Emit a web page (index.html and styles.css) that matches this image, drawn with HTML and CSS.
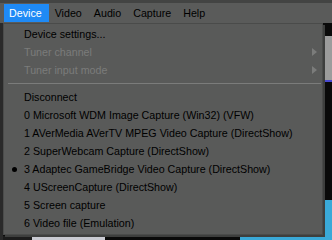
FILE: index.html
```html
<!DOCTYPE html>
<html>
<head>
<meta charset="utf-8">
<link rel="stylesheet" href="styles.css">
</head>
<body>
<div class="screen">
  <div class="topstrip"></div>
  <nav class="menubar">
    <span class="mitem active">Device</span>
    <span class="mitem">Video</span>
    <span class="mitem">Audio</span>
    <span class="mitem">Capture</span>
    <span class="mitem">Help</span>
  </nav>
  <div class="content">
    <div class="bg-left"></div>
    <div class="bg-mid">
      <div class="bg-fill"></div>
      <div class="bg-bottom">
        <span class="seg seg-dark" style="width:29px"></span>
        <span class="seg seg-light" style="width:73px"></span>
        <span class="seg seg-black" style="width:135px"></span>
        <span class="seg seg-cyan"></span>
      </div>
    </div>
    <div class="bg-right">
      <span class="seg seg-black" style="height:13px"></span>
      <span class="seg seg-gray" style="height:44px"></span>
      <span class="seg seg-blue" style="height:2px"></span>
      <span class="seg seg-black" style="height:118px"></span>
      <span class="seg seg-cyan fill"></span>
    </div>

    <ul class="dropdown">
      <li class="item"><span class="check"></span><span class="label">Device settings...</span></li>
      <li class="item disabled"><span class="check"></span><span class="label">Tuner channel</span><span class="arrow"></span></li>
      <li class="item disabled"><span class="check"></span><span class="label">Tuner input mode</span><span class="arrow"></span></li>
      <li class="sep"></li>
      <li class="item"><span class="check"></span><span class="label">Disconnect</span></li>
      <li class="item"><span class="check"></span><span class="label">0 Microsoft WDM Image Capture (Win32) (VFW)</span></li>
      <li class="item"><span class="check"></span><span class="label">1 AVerMedia AVerTV MPEG Video Capture (DirectShow)</span></li>
      <li class="item"><span class="check"></span><span class="label">2 SuperWebcam Capture (DirectShow)</span></li>
      <li class="item"><span class="check"><span class="dot"></span></span><span class="label">3 Adaptec GameBridge Video Capture (DirectShow)</span></li>
      <li class="item"><span class="check"></span><span class="label">4 UScreenCapture (DirectShow)</span></li>
      <li class="item"><span class="check"></span><span class="label">5 Screen capture</span></li>
      <li class="item"><span class="check"></span><span class="label">6 Video file (Emulation)</span></li>
    </ul>
  </div>
</div>
</body>
</html>
```

FILE: styles.css
```css
* { box-sizing: border-box; }
html, body { margin: 0; padding: 0; }
body {
  width: 332px;
  height: 240px;
  overflow: hidden;
  background: #111;
  font-family: "Liberation Sans", Arial, sans-serif;
  font-size: 10.7px;
  color: #000;
}
.screen {
  display: flex;
  flex-direction: column;
  width: 332px;
  height: 240px;
}
.topstrip {
  height: 3px;
  background: #434443;
}
.menubar {
  height: 20px;
  background: #5a5b5a;
  display: flex;
  align-items: flex-start;
  padding: 1px 0 0 4px;
}
.mitem {
  height: 18px;
  line-height: 18px;
  padding: 0 6px 0 5px;
  margin-right: 1px;
  color: #000;
}
.mitem.active {
  background: #1f8af5;
  color: #fff;
  padding-right: 7px;
}
.content {
  position: relative;
  flex: 1;
  display: flex;
}
.bg-left {
  width: 3px;
  background: #2a2a2a;
}
.bg-mid {
  flex: 1;
  display: flex;
  flex-direction: column;
}
.bg-fill { flex: 1; background: #0c0c0c; }
.bg-bottom {
  height: 4px;
  display: flex;
}
.bg-right {
  width: 7px;
  display: flex;
  flex-direction: column;
}
.seg { display: block; }
.seg-dark { background: #1c1c1c; }
.seg-light { background: #c9cad2; }
.seg-black { background: #0a0a0a; }
.seg-gray { background: #9c9c9c; }
.seg-blue { background: #4a4ad0; }
.seg-cyan { background: #3aa9d8; flex: 1; }
.fill { flex: 1; }

.dropdown {
  position: absolute;
  left: 3px;
  top: 0;
  width: 320px;
  height: 212px;
  margin: 0;
  padding: 1px 0 0 0;
  list-style: none;
  background: #595a59;
  border: 1px solid #4b4c4b;
  border-top-color: #4a4b4a;
  box-shadow: 2px 2px 0 #3e3f3e;
}
.item {
  height: 18px;
  display: flex;
  align-items: center;
}
.check {
  width: 20px;
  height: 18px;
  display: flex;
  align-items: center;
  justify-content: center;
}
.dot {
  width: 5px;
  height: 5px;
  border-radius: 50%;
  background: #000;
}
.label {
  flex: 1;
  white-space: nowrap;
}
.item.disabled .label { color: #7b7c7b; }
.arrow {
  width: 0;
  height: 0;
  border-top: 4px solid transparent;
  border-bottom: 4px solid transparent;
  border-left: 5px solid #7b7c7b;
  margin-right: 5px;
}
.sep {
  height: 9px;
  margin: 0 1px 0 4px;
  display: flex;
  flex-direction: column;
  justify-content: center;
}
.sep::before {
  content: "";
  display: block;
  height: 1px;
  background: #7b7c7b;
}
```
